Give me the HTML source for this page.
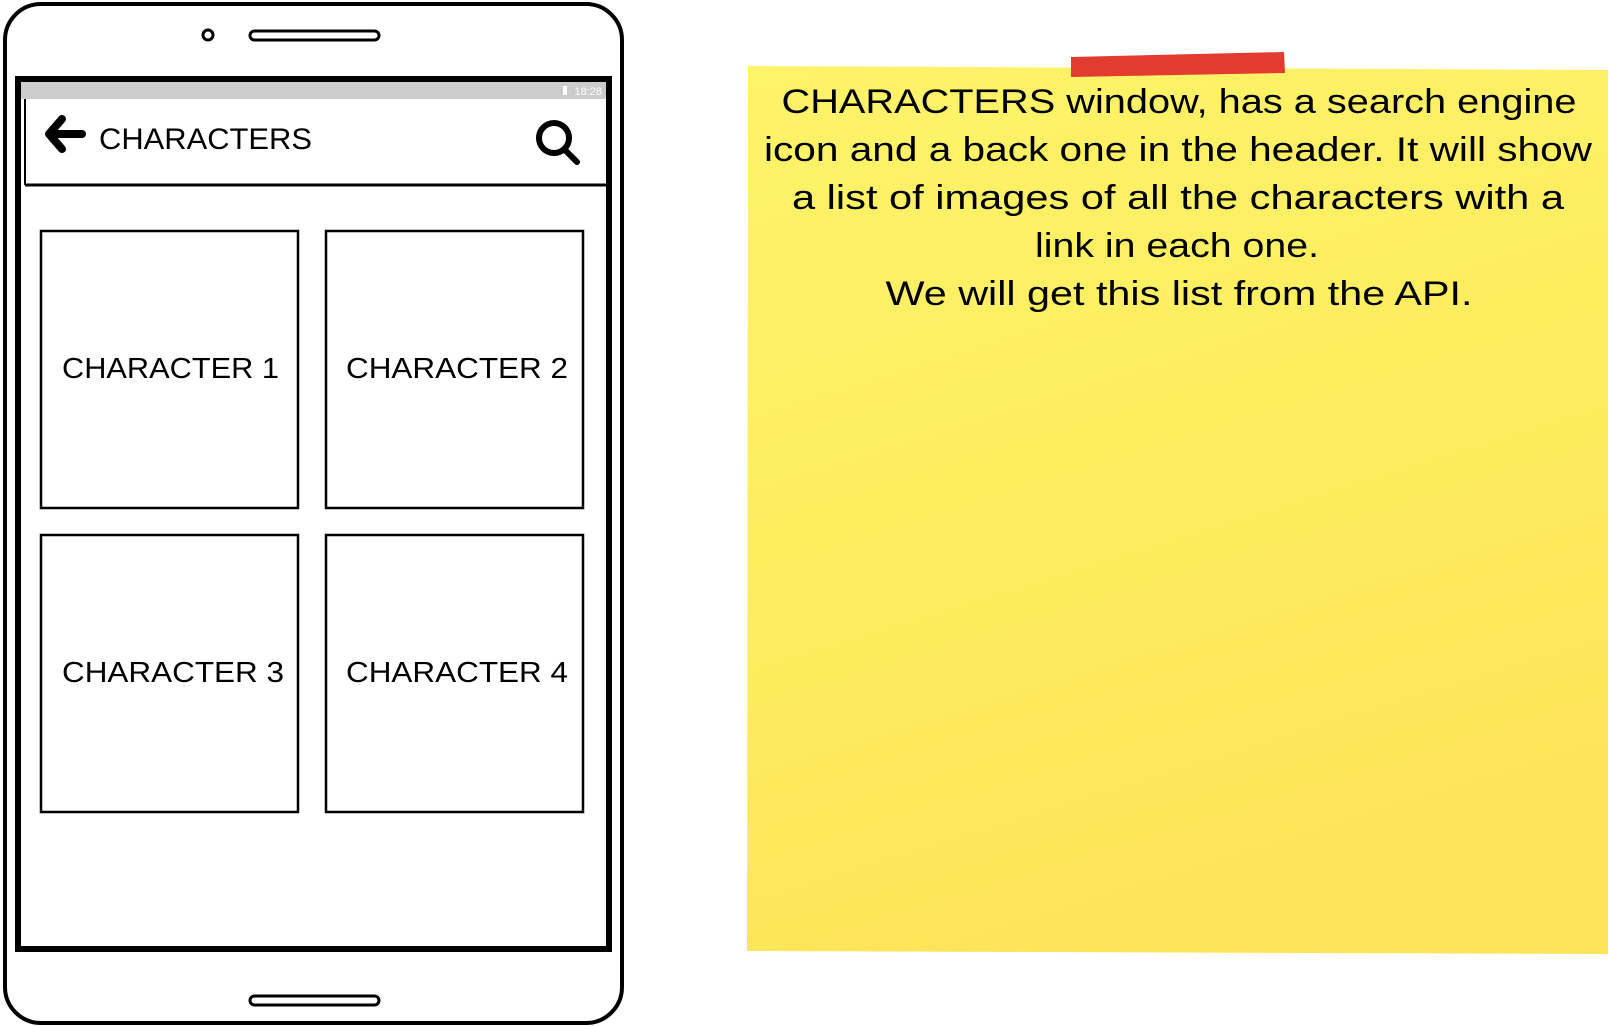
<!DOCTYPE html>
<html><head><meta charset="utf-8"><style>
html,body{margin:0;padding:0;background:#fff;width:1609px;height:1026px;overflow:hidden}
svg{display:block}
</style></head><body>
<svg width="1609" height="1026" viewBox="0 0 1609 1026" xmlns="http://www.w3.org/2000/svg" font-family="Liberation Sans, sans-serif">
<defs>
<linearGradient id="y" x1="0" y1="0" x2="0.3" y2="1">
<stop offset="0" stop-color="#fff36a"/><stop offset="0.5" stop-color="#fdee60"/><stop offset="1" stop-color="#fee45a"/>
</linearGradient>
</defs>
<!-- phone -->
<rect x="5" y="4" width="617" height="1019" rx="36" fill="#fff" stroke="#000" stroke-width="4"/>
<circle cx="208" cy="35" r="5" fill="#fff" stroke="#000" stroke-width="3"/>
<rect x="250" y="31" width="129" height="9" rx="4.5" fill="#fff" stroke="#000" stroke-width="3"/>
<rect x="250" y="996" width="129" height="9" rx="4.5" fill="#fff" stroke="#000" stroke-width="3"/>
<rect x="18" y="79" width="591" height="870" fill="#fff" stroke="#000" stroke-width="6"/>
<rect x="21" y="82" width="585" height="17" fill="#cccccc"/>
<text x="602" y="95" font-size="11" fill="#fff" text-anchor="end">18:28</text>
<rect x="563" y="86" width="4" height="9" fill="#fff"/>
<line x1="25" y1="99" x2="25" y2="185" stroke="#000" stroke-width="2"/>
<line x1="25" y1="185" x2="606" y2="185" stroke="#000" stroke-width="3"/>
<!-- back arrow -->
<path d="M62 119 L49 134 L62 149 M50 134 L82 134" fill="none" stroke="#000" stroke-width="8" stroke-linecap="round" stroke-linejoin="round"/>
<text x="99" y="149" font-size="30" textLength="213" lengthAdjust="spacingAndGlyphs">CHARACTERS</text>
<!-- search -->
<circle cx="554" cy="138" r="15" fill="none" stroke="#000" stroke-width="6"/>
<line x1="565" y1="150" x2="577" y2="162" stroke="#000" stroke-width="6" stroke-linecap="round"/>
<!-- cards -->
<g fill="#fff" stroke="#000" stroke-width="2.5">
<rect x="41" y="231" width="257" height="277"/>
<rect x="326" y="231" width="257" height="277"/>
<rect x="41" y="535" width="257" height="277"/>
<rect x="326" y="535" width="257" height="277"/>
</g>
<g font-size="29">
<text x="62" y="378" textLength="217" lengthAdjust="spacingAndGlyphs">CHARACTER 1</text>
<text x="346" y="378" textLength="222" lengthAdjust="spacingAndGlyphs">CHARACTER 2</text>
<text x="62" y="682" textLength="222" lengthAdjust="spacingAndGlyphs">CHARACTER 3</text>
<text x="346" y="682" textLength="222" lengthAdjust="spacingAndGlyphs">CHARACTER 4</text>
</g>
<!-- note -->
<polygon points="748,66 1608,70 1608,954 747,951" fill="url(#y)"/>
<polygon points="1071,57 1284,52 1285,73 1071,77" fill="#e23b2f"/>
<g font-size="34" text-anchor="middle">
<text x="1179" y="113" textLength="795" lengthAdjust="spacingAndGlyphs">CHARACTERS window, has a search engine</text>
<text x="1178" y="161" textLength="828" lengthAdjust="spacingAndGlyphs">icon and a back one in the header. It will show</text>
<text x="1178" y="209" textLength="772" lengthAdjust="spacingAndGlyphs">a list of images of all the characters with a</text>
<text x="1177" y="257" textLength="284" lengthAdjust="spacingAndGlyphs">link in each one.</text>
<text x="1179" y="305" textLength="587" lengthAdjust="spacingAndGlyphs">We will get this list from the API.</text>
</g>
</svg>
</body></html>
